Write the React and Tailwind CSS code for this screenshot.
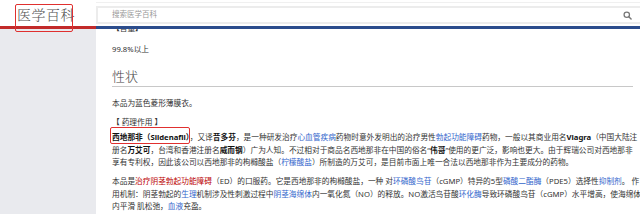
const BLUE = 'text-[#3366cc]';
const RED = 'text-[#ba0000]';

function L({ children }) {
  return <span className={BLUE}>{children}</span>;
}
function R({ children }) {
  return <span className={RED}>{children}</span>;
}

export default function App() {
  return (
    <div className="relative w-[640px] h-[214px] overflow-hidden bg-white font-['Noto_Sans','Noto_Sans_CJK_SC',sans-serif] text-[#333]">
      {/* Header */}
      <div className="flex h-[29px]">
        <div className="w-[96px] flex flex-col">
          <div className="flex-1 pl-[17px] pt-[6px] text-[14px] leading-[17px] font-light tracking-[0.5px] text-[#555] font-['Noto_Serif_CJK_SC','Noto_Sans_CJK_SC',serif]">
            医学百科
          </div>
          <div className="h-[3px] bg-[#c22a2a]" />
        </div>
        <div className="flex-1 flex flex-col border-t border-[#f0f0f0] mt-[2px]">
          <div className="mt-[3px] h-[18px] border-2 border-r-0 border-[#ececec] flex items-center pl-[14px] pr-[8px]">
            <span className="text-[7.5px] text-[#999]">搜索医学百科</span>
            <svg className="ml-auto" width="9" height="9" viewBox="0 0 10 10">
              <circle cx="4.2" cy="4.2" r="3" fill="none" stroke="#777" strokeWidth="1.4" />
              <line x1="6.4" y1="6.4" x2="9" y2="9" stroke="#777" strokeWidth="1.6" strokeLinecap="round" />
            </svg>
          </div>
          <div className="mt-auto h-[3px] bg-[#2b4c8c]" />
        </div>
      </div>

      {/* Body */}
      <div className="flex h-[185px]">
        <div className="w-[96px] bg-[#e9eaee]" />
        <div className="flex-1 overflow-hidden pl-[16px] pr-[7px] text-[7.7px] leading-[12.5px]">
          <div className="-mt-[7px]">【含量】</div>
          <div className="mt-[8.5px]">99.8%以上</div>
          <div className="mt-[12.75px] pb-[2px] border-b border-[#c8c8c8] text-[13px] leading-[16px] font-light text-[#444]">
            性状
          </div>
          <div className="mt-[9.75px]">本品为蓝色菱形薄膜衣。</div>
          <div className="mt-[6.5px]">【 药理作用 】</div>
          <p className="mt-[2.5px] whitespace-nowrap">
            <b className="text-[#111]">西地那非（Sildenafil）</b>，又译<b className="text-[#111]">昔多芬</b>，是一种研发治疗<L>心血管疾病</L>药物时意外发明出的治疗男性<L>勃起功能障碍</L>药物，一般以其商业用名<b className="text-[#111]">Viagra</b>（中国大陆注
            <br />
            册名<b className="text-[#111]">万艾可</b>，台湾和香港注册名<b className="text-[#111]">威而钢</b>）广为人知。不过相对于商品名西地那非在中国的俗名“<b className="text-[#111]">伟哥</b>”使用的更广泛，影响也更大。由于辉瑞公司对西地那非
            <br />
            享有专利权，因此该公司以西地那非的枸橼酸盐（<L>柠檬酸盐</L>）所制造的万艾可，是目前市面上唯一合法以西地那非作为主要成分的药物。
          </p>
          <p className="mt-[6.5px] whitespace-nowrap">
            本品是<R>治疗阴茎勃起功能障碍</R>（ED）的口服药。它是西地那非的枸橼酸盐，一种 对<L>环磷酸鸟苷</L>（cGMP）特异的5型<L>磷酸二酯酶</L>（PDE5）选择性<L>抑制剂</L>。 作
            <br />
            用机制：阴茎勃起的<L>生理</L>机制涉及性刺激过程中<L>阴茎海绵体</L>内一氧化氮（NO）的释放。NO激活鸟苷酸<L>环化酶</L>导致环磷酸鸟苷（cGMP）水平增高，使海绵体
            <br />
            内平滑 肌松弛，<L>血液</L>充盈。
          </p>
        </div>
      </div>

      {/* Annotation boxes */}
      <div className="absolute left-[15px] top-[4px] w-[58px] h-[28px] border-[1.5px] border-[#e0302f] rounded-[2px]" />
      <div className="absolute left-[110px] top-[127px] w-[80px] h-[17px] border-[1.5px] border-[#e0302f] rounded-[2px]" />
    </div>
  );
}
